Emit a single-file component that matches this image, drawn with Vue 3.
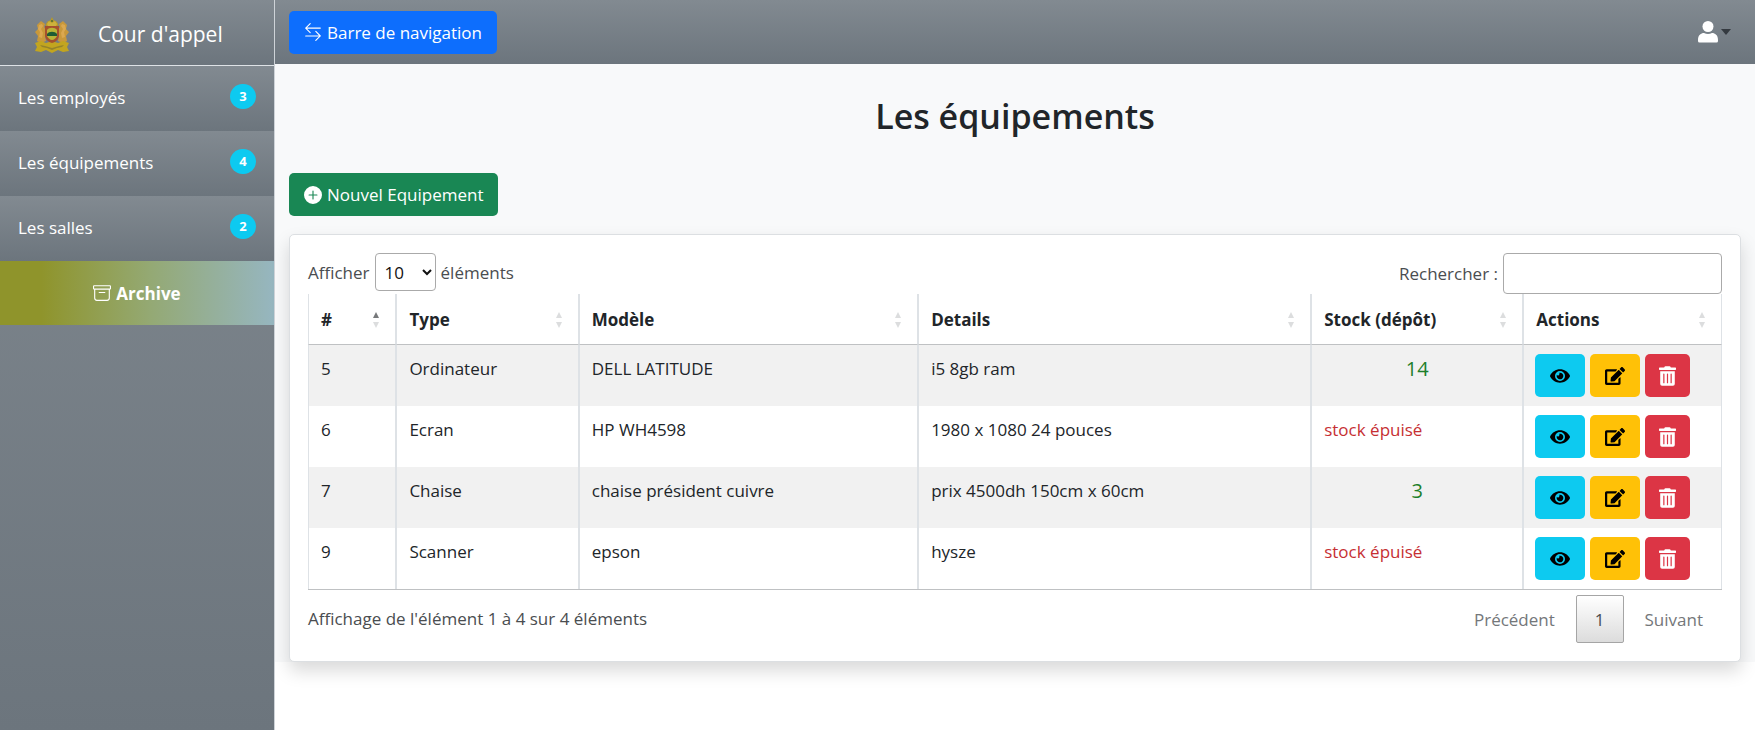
<script setup>
import { ref } from 'vue'

const menu = [
  { label: 'Les employés', count: 3 },
  { label: 'Les équipements', count: 4 },
  { label: 'Les salles', count: 2 }
]

const columns = [
  { key: 'id', label: '#', sorted: true },
  { key: 'type', label: 'Type' },
  { key: 'model', label: 'Modèle' },
  { key: 'details', label: 'Details' },
  { key: 'stock', label: 'Stock (dépôt)' },
  { key: 'actions', label: 'Actions' }
]

const rows = [
  { id: 5, type: 'Ordinateur', model: 'DELL LATITUDE', details: 'i5 8gb ram', stock: 14 },
  { id: 6, type: 'Ecran', model: 'HP WH4598', details: '1980 x 1080 24 pouces', stock: 0 },
  { id: 7, type: 'Chaise', model: 'chaise président cuivre', details: 'prix 4500dh 150cm x 60cm', stock: 3 },
  { id: 9, type: 'Scanner', model: 'epson', details: 'hysze', stock: 0 }
]

const pageSize = ref('10')
const search = ref('')
</script>

<template>
  <div class="layout">
    <aside class="sidebar">
      <div class="brand">
        <svg class="crest" viewBox="0 0 36 36" aria-hidden="true">
          <path fill="#b5992a" d="M18 0l1.500 3 3 1.500 2 3-1.500 2.500h-10L11.500 7.500l2-3 3-1.500z" />
          <path fill="#c9983a" d="M3 8l4-4 4 3-1 3 2 3-1 6 1 5-5 2-4-2 1-5-3-4 3-3z" />
          <path fill="#c9983a" d="M33 8l-4-4-4 3 1 3-2 3 1 6-1 5 5 2 4-2-1-5 3-4-3-3z" />
          <path fill="#dba850" d="M5 8l3-1 1 2-2 3 2 4-1 5-3-1 1-5-2-3z" />
          <path fill="#dba850" d="M31 8l-3-1-1 2 2 3-2 4 1 5 3-1-1-5 2-3z" />
          <path fill="#c2a51f" d="M1 26l6-2 5 2 6-2 6 2 5-2 6 2-2 4 2 4-6 1-5-2-6 3-6-3-5 2-6-1 2-4z" />
          <path fill="#94832a" d="M6 28l5 1 7 2 7-2 5-1-2 2-5 1-5 2-5-2-5-1z" />
          <path fill="#a6502c" d="M11 9h14v9c0 4-3 7-7 8-4-1-7-4-7-8z" />
          <path fill="#b9b437" d="M13 13c2-3 8-3 10 0v6c-1 2-3 4-5 4s-4-2-5-4z" />
          <path fill="#1f5c34" d="M13 17c2-3 8-3 10 0v2H13z" />
          <path fill="#cdb23c" d="M13 7l2-3 3 2 3-2 2 3-1 2h-8z" />
          <circle cx="18" cy="4" r="1" fill="#4b6b35" />
        </svg>
        <span>Cour d'appel</span>
      </div>
      <nav class="menu" aria-label="Menu">
        <a v-for="item in menu" :key="item.label" href="#" class="menu-item">
          <span>{{ item.label }}</span>
          <span class="badge">{{ item.count }}</span>
        </a>
        <a href="#" class="menu-item archive">
          <svg viewBox="0 0 16 16" width="18" height="18" fill="currentColor" aria-hidden="true">
            <path d="M0 2a1 1 0 0 1 1-1h14a1 1 0 0 1 1 1v2a1 1 0 0 1-1 1v7.500a2.500 2.500 0 0 1-2.500 2.500h-9A2.500 2.500 0 0 1 1 12.500V5a1 1 0 0 1-1-1V2zm2 3v7.500A1.500 1.500 0 0 0 3.500 14h9a1.500 1.500 0 0 0 1.500-1.500V5H2zm13-3H1v2h14V2zM5 7.500a.5.5 0 0 1 .5-.5h5a.5.5 0 0 1 0 1h-5a.5.5 0 0 1-.5-.5z" />
          </svg>
          <span>Archive</span>
        </a>
      </nav>
    </aside>

    <div class="page">
      <header class="topbar">
        <button type="button" class="btn primary">
          <svg viewBox="0 0 16 16" width="18" height="18" fill="currentColor" aria-hidden="true">
            <path d="M1 11.500a.5.5 0 0 0 .5.5h11.793l-3.147 3.146a.5.5 0 0 0 .708.708l4-4a.5.5 0 0 0 0-.708l-4-4a.5.5 0 0 0-.708.708L13.293 11H1.500a.5.5 0 0 0-.5.5zm14-7a.5.5 0 0 1-.5.5H2.707l3.147 3.146a.5.5 0 1 1-.708.708l-4-4a.5.5 0 0 1 0-.708l4-4a.5.5 0 1 1 .708.708L2.707 4H14.500a.5.5 0 0 1 .5.5z" />
          </svg>
          Barre de navigation
        </button>
        <button type="button" class="account" aria-label="Mon compte">
          <svg viewBox="0 0 20 22" width="20" height="22" fill="#fff" aria-hidden="true">
            <circle cx="10" cy="5.500" r="5.500" />
            <path d="M0 19c0-5 3-7 6-7q4 2 8 0c3 0 6 2 6 7v1q0 1.500-1.500 1.500h-17Q0 21.500 0 20z" />
          </svg>
          <span class="caret"></span>
        </button>
      </header>

      <main class="content">
        <h1>Les équipements</h1>
        <button type="button" class="btn success">
          <svg viewBox="0 0 16 16" width="18" height="18" fill="currentColor" aria-hidden="true">
            <path d="M16 8A8 8 0 1 1 0 8a8 8 0 0 1 16 0zM8.500 4.500a.5.5 0 0 0-1 0v3h-3a.5.5 0 0 0 0 1h3v3a.5.5 0 0 0 1 0v-3h3a.5.5 0 0 0 0-1h-3v-3z" />
          </svg>
          Nouvel Equipement
        </button>

        <section class="card">
          <div class="controls">
            <div class="field">
              <label for="page-size">Afficher</label>
              <select id="page-size" v-model="pageSize">
                <option>10</option>
                <option>25</option>
                <option>50</option>
                <option>100</option>
              </select>
              <span>éléments</span>
            </div>
            <div class="field">
              <label for="search">Rechercher :</label>
              <input id="search" v-model="search" type="search" />
            </div>
          </div>

          <table>
            <colgroup>
              <col v-for="column in columns" :key="column.key" :class="'col-' + column.key" />
            </colgroup>
            <thead>
              <tr>
                <th v-for="column in columns" :key="column.key" scope="col">
                  <div class="head">
                    <span>{{ column.label }}</span>
                    <svg width="8" height="16" viewBox="0 0 8 16" aria-hidden="true">
                      <path d="M4 0l3 6H1z" :fill="column.sorted ? '#77797b' : '#dcddde'" />
                      <path d="M4 16l3-6H1z" fill="#dcddde" />
                    </svg>
                  </div>
                </th>
              </tr>
            </thead>
            <tbody>
              <tr v-for="row in rows" :key="row.id">
                <td>{{ row.id }}</td>
                <td>{{ row.type }}</td>
                <td>{{ row.model }}</td>
                <td>{{ row.details }}</td>
                <td v-if="row.stock" class="in-stock">{{ row.stock }}</td>
                <td v-else class="no-stock">stock épuisé</td>
                <td class="actions-cell">
                  <div class="actions">
                    <button type="button" class="btn info" aria-label="Voir">
                      <svg viewBox="0 0 576 512" width="20" height="18" aria-hidden="true">
                        <path d="M572.520 241.400C518.290 135.590 410.930 64 288 64S57.680 135.640 3.480 241.410a32.350 32.350 0 0 0 0 29.190C57.710 376.410 165.070 448 288 448s230.320-71.640 284.520-177.410a32.350 32.350 0 0 0 0-29.190zM288 400a144 144 0 1 1 144-144 143.930 143.930 0 0 1-144 144zm0-240a95.310 95.310 0 0 0-25.310 3.790 47.850 47.850 0 0 1-66.900 66.900A95.780 95.780 0 1 0 288 160z" />
                      </svg>
                    </button>
                    <button type="button" class="btn warning" aria-label="Modifier">
                      <svg viewBox="0 0 576 512" width="20" height="18" aria-hidden="true">
                        <path d="M402.600 83.200l90.200 90.200c3.800 3.800 3.800 10 0 13.800L274.400 405.600l-92.800 10.300c-12.400 1.400-22.900-9.100-21.500-21.500l10.300-92.800L388.800 83.200c3.800-3.800 10-3.800 13.800 0zm162-22.900l-48.800-48.800c-15.200-15.200-39.900-15.200-55.200 0l-35.400 35.400c-3.800 3.800-3.800 10 0 13.800l90.200 90.200c3.800 3.800 10 3.800 13.800 0l35.400-35.400c15.200-15.300 15.200-40 0-55.200zM384 346.200V448H64V128h229.800c3.200 0 6.200-1.300 8.500-3.500l40-40c7.600-7.600 2.200-20.500-8.500-20.500H48C21.500 64 0 85.500 0 112v352c0 26.500 21.500 48 48 48h352c26.500 0 48-21.500 48-48V306.200c0-10.700-12.900-16-20.500-8.500l-40 40c-2.200 2.300-3.500 5.300-3.500 8.500z" />
                      </svg>
                    </button>
                    <button type="button" class="btn danger" aria-label="Supprimer">
                      <svg viewBox="0 0 448 512" width="17" height="20" fill="#fff" aria-hidden="true">
                        <path d="M32 464a48 48 0 0 0 48 48h288a48 48 0 0 0 48-48V128H32zm272-256a16 16 0 0 1 32 0v224a16 16 0 0 1-32 0zm-96 0a16 16 0 0 1 32 0v224a16 16 0 0 1-32 0zm-96 0a16 16 0 0 1 32 0v224a16 16 0 0 1-32 0zM432 32H312l-9.400-18.700A24 24 0 0 0 281.100 0H166.800a23.720 23.720 0 0 0-21.400 13.300L136 32H16A16 16 0 0 0 0 48v32a16 16 0 0 0 16 16h416a16 16 0 0 0 16-16V48a16 16 0 0 0-16-16z" />
                      </svg>
                    </button>
                  </div>
                </td>
              </tr>
            </tbody>
          </table>

          <div class="footer">
            <span class="summary">Affichage de l'élément 1 à 4 sur 4 éléments</span>
            <nav class="pager" aria-label="Pagination">
              <button type="button" class="muted">Précédent</button>
              <button type="button" class="current" aria-current="page">1</button>
              <button type="button" class="muted">Suivant</button>
            </nav>
          </div>
        </section>
      </main>
    </div>
  </div>
</template>

<style>
body {
  margin: 0;
  background: #fff;
}
</style>

<style scoped>
.layout,
.layout * {
  box-sizing: border-box;
}

.layout {
  display: flex;
  min-height: 100vh;
  font-family: "Open Sans", "Noto Sans", sans-serif;
  font-size: 17px;
  line-height: 27px;
  color: #212529;
}

button,
input,
select {
  font: inherit;
}

a {
  color: inherit;
  text-decoration: none;
}

.sidebar {
  flex: 0 0 275px;
  border-right: 1px solid #ced3d8;
  background: linear-gradient(180deg, #828a91, #6c757d);
  color: #fff;
}

.brand {
  display: flex;
  align-items: center;
  gap: 28px;
  height: 66px;
  padding: 4px 34px 0;
  border-bottom: 1px solid #dee2e6;
  background: linear-gradient(180deg, #828a91, #6c757d);
  font-size: 21px;
}

.crest {
  width: 36px;
  height: 36px;
}

.menu-item {
  display: flex;
  justify-content: space-between;
  align-items: flex-start;
  height: 65px;
  padding: 18px;
  background: linear-gradient(180deg, #828a91, #6c757d);
}

.badge {
  min-width: 26px;
  border-radius: 13px;
  background: #0dcaf0;
  font-size: 13px;
  font-weight: 700;
  line-height: 25px;
  text-align: center;
}

.menu-item.archive {
  justify-content: center;
  align-items: center;
  gap: 5px;
  height: 64px;
  background: linear-gradient(90deg, #8f942b 15%, #94a974 55%, #96b6c0);
  font-weight: 700;
}

.page {
  flex: 1;
  min-width: 0;
}

.topbar {
  display: flex;
  justify-content: space-between;
  align-items: center;
  height: 64px;
  padding: 0 24px 0 14px;
  background: linear-gradient(180deg, #828a91, #6c757d);
}

.btn {
  display: inline-flex;
  align-items: center;
  gap: 5px;
  height: 43px;
  padding: 0 15px;
  border: 0;
  border-radius: 5px;
  color: #fff;
  white-space: nowrap;
}

.primary {
  background: #0d6efd;
}

.success {
  background: #198754;
}

.account {
  display: flex;
  align-items: center;
  gap: 3px;
  padding: 0;
  border: 0;
  background: none;
}

.caret {
  border: 5px solid transparent;
  border-top: 6px solid #343a40;
  border-bottom: 0;
}

.content {
  padding: 30px 14px 0;
  background: #f8f9fa;
}

h1 {
  margin: 0 0 34px;
  font-size: 34px;
  font-weight: 600;
  line-height: 45px;
  text-align: center;
}

.card {
  margin-top: 18px;
  padding: 18px;
  border: 1px solid #dcdfe2;
  border-radius: 5px;
  background: #fff;
  box-shadow: 0 9px 18px rgba(0, 0, 0, 0.15);
}

.controls,
.footer {
  display: flex;
  justify-content: space-between;
  align-items: flex-start;
  color: #4a4d50;
}

.field {
  display: flex;
  align-items: center;
  gap: 5px;
}

select {
  width: 61px;
  height: 38px;
  padding: 0 5px;
  border: 1px solid #aaa;
  border-radius: 4px;
  background: #fff;
  color: #111;
}

input {
  width: 219px;
  height: 41px;
  padding: 0 6px;
  border: 1px solid #aaa;
  border-radius: 4px;
  background: #fff;
}

table {
  width: 100%;
  table-layout: fixed;
  border-spacing: 0;
  border-bottom: 1px solid #bfc1c3;
}

.col-id {
  width: 6.25%;
}

.col-type {
  width: 12.9%;
}

.col-model {
  width: 24%;
}

.col-details {
  width: 27.8%;
}

.col-stock {
  width: 15%;
}

th,
td {
  border: 0 solid #dee2e6;
  border-width: 0 1px;
  text-align: left;
  vertical-align: top;
}

th {
  height: 51px;
  padding: 12px 15px 11px 12px;
  border-bottom: 1px solid #bfc1c3;
  font-weight: 700;
}

.head {
  display: flex;
  justify-content: space-between;
  align-items: center;
}

td {
  padding: 10px 12px;
}

td.actions-cell {
  padding: 9px 11px;
}

tbody tr:nth-child(odd) {
  background: #f1f1f1;
}

.in-stock {
  color: #1d7f2a;
  font-size: 20px;
  text-align: center;
}

.no-stock {
  color: #c62f33;
}

.actions {
  display: flex;
  gap: 5px;
}

.actions .danger {
  padding: 0 14px;
}

.info {
  background: #0dcaf0;
}

.warning {
  background: #ffc107;
}

.danger {
  background: #dc3545;
}

.summary {
  padding-top: 15px;
}

.pager {
  display: flex;
  padding-top: 5px;
}

.pager button {
  height: 48px;
  padding: 0 18px;
  border: 1px solid transparent;
  border-radius: 2px;
  background: none;
  color: #4a4d50;
}

.pager .muted {
  color: #74777a;
}

.pager .current {
  margin: 0 2px;
  border-color: #a5a5a5;
  background: linear-gradient(180deg, #fff, #dcdcdc);
}
</style>
